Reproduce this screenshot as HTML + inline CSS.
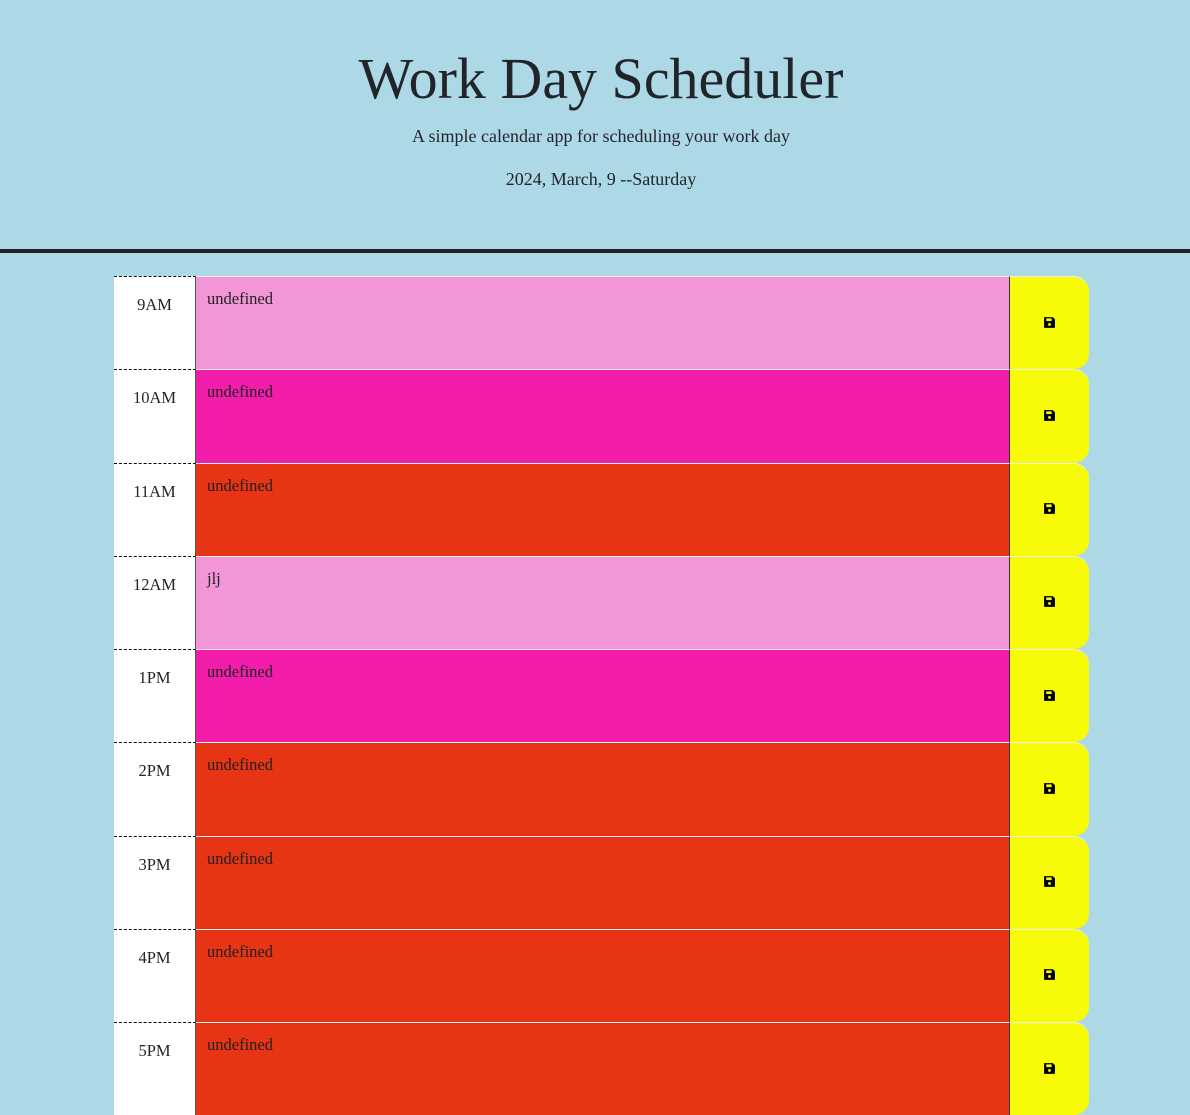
<!DOCTYPE html>
<html><head><style>
body{margin:0;background:#add8e6;font-family:"Liberation Serif",serif;color:#212529;width:1190px;height:1114px;overflow:hidden}
header{height:249px;border-bottom:4px solid #212529;text-align:center;position:relative}
h1{position:absolute;top:43px;left:0;right:0;margin:0;font-size:58px;font-weight:400;line-height:72px;padding-left:12px}
.sub{position:absolute;top:126px;left:0;right:0;font-size:18px;margin:0;padding-left:12px}
.date{position:absolute;top:169px;left:0;right:0;font-size:18px;margin:0;padding-left:12px}
.rows{position:absolute;top:276px;left:114px;width:975px}
.row{height:93.25px;display:flex;position:relative}
.hour{width:82px;background:#fff;border-top:1px dashed #000;box-sizing:border-box;text-align:center;font-size:16.5px;padding-top:18px;border-right:1px solid #555}
.ta{width:813px;box-sizing:border-box;border-top:1px solid #eee;padding:12px 11px;font-size:16.5px;color:#222}
.btn{width:80px;background:#f8fb07;border-radius:0 15px 15px 0;border-left:1px solid #333;box-sizing:border-box;display:flex;align-items:center;justify-content:center;border-top:1px solid #eee}
.past{background:#e63414}.present{background:#f21eab}.future{background:#f396d7}
svg{margin-top:-2px}
</style></head><body>
<header><h1>Work Day Scheduler</h1><p class="sub">A simple calendar app for scheduling your work day</p><p class="date">2024, March, 9 --Saturday</p></header>
<div class="rows">
<div class="row"><div class="hour">9AM</div><div class="ta future">undefined</div><div class="btn"><svg width="13" height="13" viewBox="0 0 12 12"><path d="M1 1h8l2 2v7.5q0 .5-.5.5h-9q-.5 0-.5-.5z" fill="#000"/><rect x="3" y="2.2" width="5" height="2.5" fill="#f8fb07"/><circle cx="6" cy="7.8" r="1.3" fill="#f8fb07"/></svg></div></div>
<div class="row"><div class="hour">10AM</div><div class="ta present">undefined</div><div class="btn"><svg width="13" height="13" viewBox="0 0 12 12"><path d="M1 1h8l2 2v7.5q0 .5-.5.5h-9q-.5 0-.5-.5z" fill="#000"/><rect x="3" y="2.2" width="5" height="2.5" fill="#f8fb07"/><circle cx="6" cy="7.8" r="1.3" fill="#f8fb07"/></svg></div></div>
<div class="row"><div class="hour">11AM</div><div class="ta past">undefined</div><div class="btn"><svg width="13" height="13" viewBox="0 0 12 12"><path d="M1 1h8l2 2v7.5q0 .5-.5.5h-9q-.5 0-.5-.5z" fill="#000"/><rect x="3" y="2.2" width="5" height="2.5" fill="#f8fb07"/><circle cx="6" cy="7.8" r="1.3" fill="#f8fb07"/></svg></div></div>
<div class="row"><div class="hour">12AM</div><div class="ta future">jlj</div><div class="btn"><svg width="13" height="13" viewBox="0 0 12 12"><path d="M1 1h8l2 2v7.5q0 .5-.5.5h-9q-.5 0-.5-.5z" fill="#000"/><rect x="3" y="2.2" width="5" height="2.5" fill="#f8fb07"/><circle cx="6" cy="7.8" r="1.3" fill="#f8fb07"/></svg></div></div>
<div class="row"><div class="hour">1PM</div><div class="ta present">undefined</div><div class="btn"><svg width="13" height="13" viewBox="0 0 12 12"><path d="M1 1h8l2 2v7.5q0 .5-.5.5h-9q-.5 0-.5-.5z" fill="#000"/><rect x="3" y="2.2" width="5" height="2.5" fill="#f8fb07"/><circle cx="6" cy="7.8" r="1.3" fill="#f8fb07"/></svg></div></div>
<div class="row"><div class="hour">2PM</div><div class="ta past">undefined</div><div class="btn"><svg width="13" height="13" viewBox="0 0 12 12"><path d="M1 1h8l2 2v7.5q0 .5-.5.5h-9q-.5 0-.5-.5z" fill="#000"/><rect x="3" y="2.2" width="5" height="2.5" fill="#f8fb07"/><circle cx="6" cy="7.8" r="1.3" fill="#f8fb07"/></svg></div></div>
<div class="row"><div class="hour">3PM</div><div class="ta past">undefined</div><div class="btn"><svg width="13" height="13" viewBox="0 0 12 12"><path d="M1 1h8l2 2v7.5q0 .5-.5.5h-9q-.5 0-.5-.5z" fill="#000"/><rect x="3" y="2.2" width="5" height="2.5" fill="#f8fb07"/><circle cx="6" cy="7.8" r="1.3" fill="#f8fb07"/></svg></div></div>
<div class="row"><div class="hour">4PM</div><div class="ta past">undefined</div><div class="btn"><svg width="13" height="13" viewBox="0 0 12 12"><path d="M1 1h8l2 2v7.5q0 .5-.5.5h-9q-.5 0-.5-.5z" fill="#000"/><rect x="3" y="2.2" width="5" height="2.5" fill="#f8fb07"/><circle cx="6" cy="7.8" r="1.3" fill="#f8fb07"/></svg></div></div>
<div class="row"><div class="hour">5PM</div><div class="ta past">undefined</div><div class="btn"><svg width="13" height="13" viewBox="0 0 12 12"><path d="M1 1h8l2 2v7.5q0 .5-.5.5h-9q-.5 0-.5-.5z" fill="#000"/><rect x="3" y="2.2" width="5" height="2.5" fill="#f8fb07"/><circle cx="6" cy="7.8" r="1.3" fill="#f8fb07"/></svg></div></div>
</div>
</body></html>
